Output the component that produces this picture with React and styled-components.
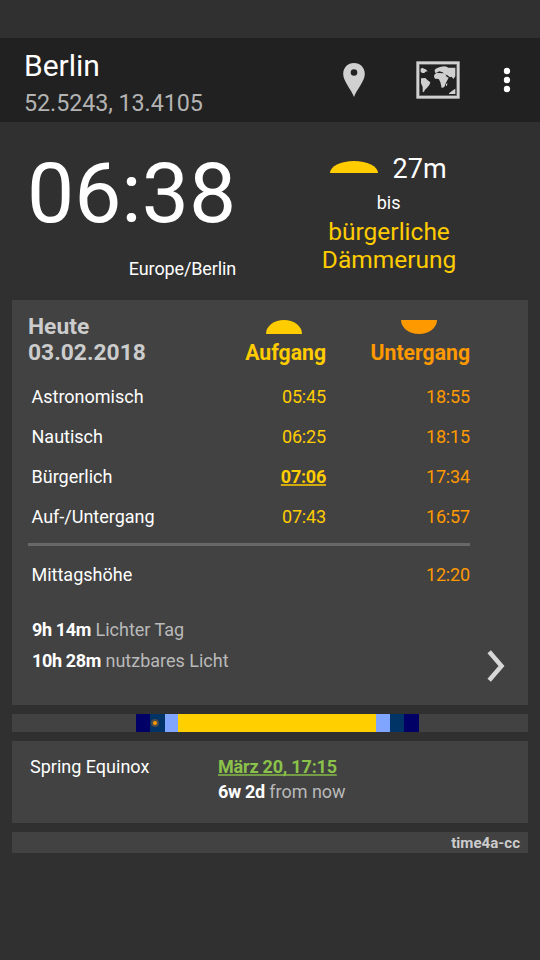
import React from "react";
import styled, { createGlobalStyle } from "styled-components";

const Global = createGlobalStyle`
  * { box-sizing: border-box; }
  body { margin: 0; background: #303030; }
  b { letter-spacing: -0.35px; }
`;

const Screen = styled.div`
  width: 540px;
  height: 960px;
  padding-top: 38px;
  background: #303030;
  color: #fff;
  font-family: Roboto, "Liberation Sans", sans-serif;
  font-size: 18px;
  white-space: nowrap;
  overflow: hidden;
`;

const Toolbar = styled.header`
  display: flex;
  height: 84px;
  padding-left: 24px;
  background: #212121;
`;

const Place = styled.div`
  width: 319px;
  padding-top: 10px;
`;

const City = styled.div`
  font-size: 30px;
  line-height: 36px;
`;

const Coordinates = styled.div`
  margin-top: 5px;
  font-size: 23.3px;
  letter-spacing: -0.06px;
  line-height: 28px;
  color: #b3b3b3;
`;

const Actions = styled.div`
  display: flex;
  align-items: center;
  svg { display: block; }
`;

const PinIcon = styled.svg`
  width: 22px;
  height: 34px;
  margin-right: 51px;
`;

const MapIcon = styled.svg`
  width: 44px;
  height: 38px;
  margin-right: 43px;
`;

const MenuIcon = styled.svg`
  width: 8px;
  height: 26px;
`;

const Hero = styled.section`
  display: flex;
  height: 178px;
`;

const Clock = styled.div`
  width: 237px;
  padding-top: 23px;
  text-align: right;
`;

const Time = styled.div`
  font-size: 84px;
  line-height: 98px;
`;

const Zone = styled.div`
  margin-top: 15px;
  letter-spacing: -0.12px;
  line-height: 22px;
`;

const Next = styled.div`
  width: 305px;
  padding-top: 31px;
  text-align: center;
`;

const Countdown = styled.div`
  display: flex;
  justify-content: center;
  gap: 15px;
  font-size: 27px;
  line-height: 32px;
`;

const Until = styled.div`
  margin-top: 7px;
  padding-left: 1px;
  line-height: 22px;
`;

const Phase = styled.div`
  margin-top: 4px;
  padding-left: 2px;
  font-size: 24.5px;
  line-height: 28px;
  color: #fc0;
`;

const Sun = styled.span`
  display: block;
  width: ${(p) => p.$width}px;
  height: ${(p) => p.$height}px;
  background: ${(p) => (p.$down ? "#f90" : "#fc0")};
  border-radius: ${(p) => (p.$down ? "0 0 50% 50% / 0 0 100% 100%" : "50% 50% 0 0 / 100% 100% 0 0")};
  ${Countdown} & { margin-top: 8px; }
`;

const Card = styled.section`
  margin: 0 12px 9px;
  background: #424242;
`;

const Today = styled(Card)`
  height: 405px;
  padding: 13px 0 0 16px;
`;

const Table = styled.div`
  width: 442px;
`;

const Row = styled.div`
  display: grid;
  grid-template-columns: 154px 144px 144px;
  line-height: 40px;
`;

const Head = styled(Row)`
  height: 64px;
  line-height: 26px;
`;

const DateLabel = styled.div`
  padding-top: 1px;
  font-size: 22.8px;
  font-weight: 700;
  color: #ccc;
`;

const HeadCell = styled.div`
  display: flex;
  flex-direction: column;
  align-items: flex-end;
  padding-top: 7px;
  font-size: 21.2px;
  font-weight: 700;
  color: ${(p) => (p.$down ? "#f90" : "#fc0")};
  ${Sun} {
    margin: 0 ${(p) => (p.$down ? 33 : 24)}px 6px 0;
  }
`;

const Label = styled.div`
  padding-left: 3.5px;
`;

const Rise = styled.div`
  text-align: right;
  color: #fc0;
  letter-spacing: ${(p) => (p.$current ? -0.25 : -0.15)}px;
  font-weight: ${(p) => (p.$current ? 700 : 400)};
  text-decoration: ${(p) => (p.$current ? "underline 2px rgba(255, 204, 0, 0.75)" : "none")};
  text-underline-offset: 1px;
  text-decoration-skip-ink: none;
`;

const Set = styled.div`
  grid-column: 3;
  text-align: right;
  letter-spacing: -0.15px;
  color: #f90;
`;

const Rule = styled.div`
  height: 3px;
  margin: 6px 0 9px;
  background: #686868;
`;

const Summary = styled.div`
  display: flex;
  margin-top: 19px;
  padding-left: 4px;
  line-height: 31px;
`;

const Durations = styled.div`
  width: 455px;
`;

const Soft = styled.span`
  color: #b9b9b9;
`;

const Chevron = styled.svg`
  width: 18px;
  height: 32px;
  margin-top: 36px;
`;

const DayBar = styled(Card)`
  display: flex;
  height: 18px;
`;

const Segment = styled.div`
  display: flex;
  align-items: center;
  width: ${(p) => p.$width}px;
  padding-left: 1px;
  background: ${(p) => p.$color};
`;

const NowDot = styled.span`
  width: 8px;
  height: 8px;
  border: 2px solid #4b4b4b;
  border-radius: 50%;
  background: #f90;
`;

const Season = styled(Card)`
  display: grid;
  grid-template-columns: 188px 1fr;
  height: 82px;
  padding: 13px 0 0 18px;
  line-height: 25px;
`;

const Event = styled.div`
  font-weight: 700;
  letter-spacing: -0.2px;
  color: #8bc34a;
  text-decoration: underline 2px rgba(139, 195, 74, 0.7);
  text-underline-offset: 1px;
  text-decoration-skip-ink: none;
`;

const Footer = styled(Card)`
  height: 21px;
  padding-right: 8px;
  font-size: 15.1px;
  font-weight: 700;
  line-height: 22px;
  text-align: right;
  color: #ccc;
`;

const TIMES = [
  ["Astronomisch", "05:45", "18:55"],
  ["Nautisch", "06:25", "18:15"],
  ["Bürgerlich", "07:06", "17:34", true],
  ["Auf-/Untergang", "07:43", "16:57"],
];

const SEGMENTS = [
  [124, "transparent"],
  [14, "#006"],
  [15, "#036", true],
  [13, "#7fa5ff"],
  [198, "#ffcf00"],
  [14, "#7fa5ff"],
  [14, "#036"],
  [15, "#006"],
];

export default function App() {
  return (
    <>
      <Global />
      <Screen>
        <Toolbar>
          <Place>
            <City>Berlin</City>
            <Coordinates>52.5243, 13.4105</Coordinates>
          </Place>
          <Actions>
            <PinIcon viewBox="0 0 22 34">
              <path
                fill="#d0d0d0"
                fillRule="evenodd"
                d="M11 0C4.8 0 .2 4.600 .2 10.800C.2 18.500 8 26 11 34C14 26 21.800 18.500 21.800 10.800C21.800 4.600 17.200 0 11 0ZM11 6.200A3.300 3.300 0 1 1 11 12.800A3.300 3.300 0 1 1 11 6.200Z"
              />
            </PinIcon>
            <MapIcon viewBox="258 63 132 114">
              <rect x="263.500" y="68.500" width="121" height="103" fill="none" stroke="#d0d0d0" strokeWidth="9" />
              <rect x="269" y="74" width="110" height="92" fill="none" stroke="#666" strokeWidth="2" />
              <g fill="#d0d0d0">
                <path d="M272 86L277 83L282 86L287 88L293 94L286 95L283 99L277 99L272 96Z" />
                <path d="M273 115L286 114L292 120L301 127L298 135L290 145L285 149L282 155L278 157L278 141L273 130Z" />
                <path d="M313 104L319 99L345 100L350 110L356 113L348 128L343 141L335 144L331 126L326 117L315 116L312 110Z" />
                <path d="M315 98L314 89L320 85L330 81L342 79L350 80L355 83L376 83L376 109L370 117L365 110L360 112L352 106L343 102L338 97L328 94L320 98Z" />
                <path d="M357 160L370 150L376 146L376 162L357 162ZM348 132L352 129L351 137L348 138Z" />
              </g>
            </MapIcon>
            <MenuIcon viewBox="0 0 8 26">
              <g fill="#fff">
                <circle cx="4" cy="4" r="3.200" />
                <circle cx="4" cy="13" r="3.200" />
                <circle cx="4" cy="22" r="3.200" />
              </g>
            </MenuIcon>
          </Actions>
        </Toolbar>

        <Hero>
          <Clock>
            <Time>06:38</Time>
            <Zone>Europe/Berlin</Zone>
          </Clock>
          <Next>
            <Countdown>
              <Sun $width={48} $height={12} />
              27m
            </Countdown>
            <Until>bis</Until>
            <Phase>
              bürgerliche
              <br />
              Dämmerung
            </Phase>
          </Next>
        </Hero>

        <Today>
          <Table>
            <Head>
              <DateLabel>
                Heute
                <br />
                03.02.2018
              </DateLabel>
              <HeadCell>
                <Sun $width={36} $height={14} />
                Aufgang
              </HeadCell>
              <HeadCell $down>
                <Sun $width={36} $height={14} $down />
                Untergang
              </HeadCell>
            </Head>
            {TIMES.map(([label, rise, set, current]) => (
              <Row key={label}>
                <Label>{label}</Label>
                <Rise $current={current}>{rise}</Rise>
                <Set>{set}</Set>
              </Row>
            ))}
            <Rule />
            <Row>
              <Label>Mittagshöhe</Label>
              <Set>12:20</Set>
            </Row>
          </Table>
          <Summary>
            <Durations>
              <div><b>9h 14m</b> <Soft>Lichter Tag</Soft></div>
              <div><b>10h 28m</b> <Soft>nutzbares Licht</Soft></div>
            </Durations>
            <Chevron viewBox="0 0 18 32">
              <path d="M2.200 1.800L14.500 16L2.200 30.200" fill="none" stroke="#d8d8d8" strokeWidth="4.500" />
            </Chevron>
          </Summary>
        </Today>

        <DayBar>
          {SEGMENTS.map(([width, color, now], i) => (
            <Segment key={i} $width={width} $color={color}>
              {now && <NowDot />}
            </Segment>
          ))}
        </DayBar>

        <Season>
          <div>Spring Equinox</div>
          <div>
            <Event>März 20, 17:15</Event>
            <b>6w 2d</b> <Soft>from now</Soft>
          </div>
        </Season>

        <Footer>time4a-cc</Footer>
      </Screen>
    </>
  );
}
